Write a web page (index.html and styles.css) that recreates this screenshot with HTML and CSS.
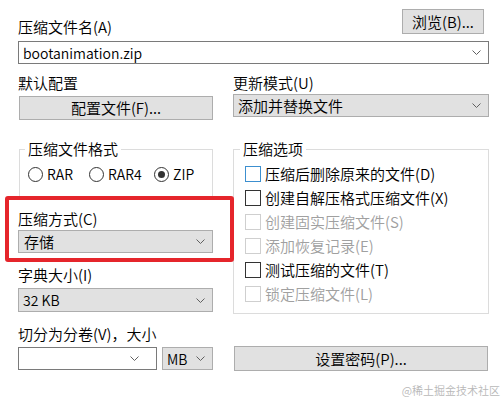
FILE: index.html
```html
<!DOCTYPE html>
<html>

<head>
	<meta charset="utf-8">
	<link rel="stylesheet" href="styles.css">
</head>

<body>
	<div class="dialog">
		<div class="head">
			<label class="lbl">压缩文件名(A)</label>
			<button class="btn browse">浏览(B)...</button>
		</div>
		<div class="combo name">
			<span class="value latin">bootanimation.zip</span>
			<svg class="chev" width="9" height="5" viewBox="0 0 9 5"><polyline points="0.5,0.5 4.5,4.5 8.5,0.5" /></svg>
		</div>

		<div class="cols row2">
			<div class="col">
				<div class="lbl">默认配置</div>
				<button class="btn profile">配置文件(F)...</button>
			</div>
			<div class="col">
				<div class="lbl">更新模式(U)</div>
				<div class="combo gray update">
					<span class="value">添加并替换文件</span>
					<svg class="chev" width="9" height="5" viewBox="0 0 9 5"><polyline points="0.5,0.5 4.5,4.5 8.5,0.5" /></svg>
				</div>
			</div>
		</div>

		<div class="cols main">
			<div class="col left">
				<div class="group format">
					<div class="group-title">压缩文件格式</div>
					<div class="radios">
						<label class="radio"><span class="dot"></span>RAR</label>
						<label class="radio"><span class="dot"></span>RAR4</label>
						<label class="radio"><span class="dot checked"></span>ZIP</label>
					</div>
				</div>

				<div class="lbl method">压缩方式(C)</div>
				<div class="combo gray method-box">
					<span class="value">存储</span>
					<svg class="chev" width="9" height="5" viewBox="0 0 9 5"><polyline points="0.5,0.5 4.5,4.5 8.5,0.5" /></svg>
				</div>

				<div class="lbl dict">字典大小(I)</div>
				<div class="combo gray dict-box">
					<span class="value latin">32 KB</span>
					<svg class="chev" width="9" height="5" viewBox="0 0 9 5"><polyline points="0.5,0.5 4.5,4.5 8.5,0.5" /></svg>
				</div>

				<div class="lbl split-lbl">切分为分卷(V)，大小</div>
				<div class="split">
					<div class="combo volume">
						<svg class="chev" width="9" height="5" viewBox="0 0 9 5"><polyline points="0.5,0.5 4.5,4.5 8.5,0.5" /></svg>
					</div>
					<div class="combo gray unit">
						<span class="value latin">MB</span>
						<svg class="chev" width="9" height="5" viewBox="0 0 9 5"><polyline points="0.5,0.5 4.5,4.5 8.5,0.5" /></svg>
					</div>
				</div>
			</div>

			<div class="col right">
				<div class="group options">
					<div class="group-title">压缩选项</div>
					<div class="checks">
						<label class="check"><span class="box hover"></span>压缩后删除原来的文件(D)</label>
						<label class="check"><span class="box"></span>创建自解压格式压缩文件(X)</label>
						<label class="check disabled"><span class="box"></span>创建固实压缩文件(S)</label>
						<label class="check disabled"><span class="box"></span>添加恢复记录(E)</label>
						<label class="check"><span class="box"></span>测试压缩的文件(T)</label>
						<label class="check disabled"><span class="box"></span>锁定压缩文件(L)</label>
					</div>
				</div>
				<button class="btn password">设置密码(P)...</button>
			</div>
		</div>
	</div>

	<div class="highlight"></div>
	<div class="watermark">@稀土掘金技术社区</div>
</body>

</html>
```

FILE: styles.css
```css
body {
	margin: 0;
	background: #fff;
	color: #000;
	font-family: "Noto Sans CJK SC", "Noto Sans", sans-serif;
	font-size: 15px;
	font-weight: 350;
	line-height: 20px;
}

.dialog {
	width: 471px;
	padding: 9px 15px 0 18px;
}

.lbl {
	display: block;
	height: 20px;
	white-space: nowrap;
}

.latin {
	font-size: 14px;
}

.head {
	display: flex;
	justify-content: space-between;
	align-items: flex-end;
	height: 25px;
}

.head>.lbl {
	margin-bottom: -3px;
}

.btn {
	box-sizing: border-box;
	display: block;
	margin: 0;
	padding: 0;
	background: #e1e1e1;
	border: 1px solid #adadad;
	border-radius: 0;
	font: inherit;
	color: #000;
	text-align: center;
}

.browse {
	width: 82px;
	height: 25px;
	margin-right: 5px;
}

.combo {
	box-sizing: border-box;
	display: flex;
	align-items: center;
	height: 23px;
	padding: 0 7px 0 4px;
	background: #fff;
	border: 1px solid #7a7a7a;
	white-space: nowrap;
}

.combo.gray {
	background: #e1e1e1;
	border-color: #adadad;
}

.combo .chev {
	margin-left: auto;
	fill: none;
	stroke: #606060;
	stroke-width: 1;
}

.name {
	margin-top: 7px;
}

.cols {
	display: grid;
	grid-template-columns: 195px 256px;
	column-gap: 20px;
}

.row2 {
	margin-top: 9px;
}

.profile {
	width: 194px;
	height: 24px;
	margin: 3px 0 0 1px;
}

.update {
	margin-top: 1px;
}

.main {
	margin-top: 29px;
}

.group {
	border: 1px solid #dcdcdc;
}

.group-title {
	width: max-content;
	margin: -11px 0 0 5px;
	padding: 0 3px;
	background: #fff;
	line-height: 20px;
}

.format {
	margin-left: 1px;
	padding-bottom: 12px;
}

.radios {
	display: grid;
	grid-template-columns: 61px 65px auto;
	margin: 5px 0 0 8px;
	height: 20px;
}

.radio {
	display: flex;
	align-items: center;
	gap: 4px;
	font-size: 14px;
}

.dot {
	box-sizing: border-box;
	width: 15px;
	height: 15px;
	border: 1px solid #333;
	border-radius: 50%;
	display: flex;
	align-items: center;
	justify-content: center;
}

.dot.checked::after {
	content: "";
	width: 7px;
	height: 7px;
	border-radius: 50%;
	background: #333;
}

.method {
	margin-top: 12px;
}

.method-box {
	margin-top: 1px;
	padding-left: 5px;
}

.dict {
	margin-top: 12px;
}

.dict-box {
	margin-top: 3px;
	height: 24px;
}

.split-lbl {
	margin-top: 12px;
}

.split {
	display: grid;
	grid-template-columns: 139px 51px;
	column-gap: 5px;
	margin-top: 3px;
}

.split .combo {
	height: 23px;
}

.volume {
	padding-right: 17px;
}

.unit {
	padding-right: 7px;
}

.options {
	padding-bottom: 7px;
}

.options .group-title {
	margin-left: 6px;
}

.checks {
	margin: 3px 0 0 11px;
}

.check {
	display: flex;
	align-items: center;
	gap: 4px;
	height: 24px;
	white-space: nowrap;
}

.box {
	box-sizing: border-box;
	width: 16px;
	height: 16px;
	border: 1px solid #333;
	background: #fff;
}

.box.hover {
	border-color: #3c8fcf;
}

.check.disabled {
	color: #a0a0a0;
}

.check.disabled .box {
	border-color: #cfcfcf;
}

.password {
	width: 254px;
	height: 25px;
	margin: 32px 0 0 1px;
}

.highlight {
	position: absolute;
	left: 5px;
	top: 196px;
	width: 229px;
	height: 66px;
	box-sizing: border-box;
	border: 4px solid #e5252b;
	border-radius: 3px;
}

.watermark {
	position: absolute;
	right: 4px;
	top: 383px;
	font-size: 11px;
	line-height: 14px;
	color: #b8b8b8;
}
```
